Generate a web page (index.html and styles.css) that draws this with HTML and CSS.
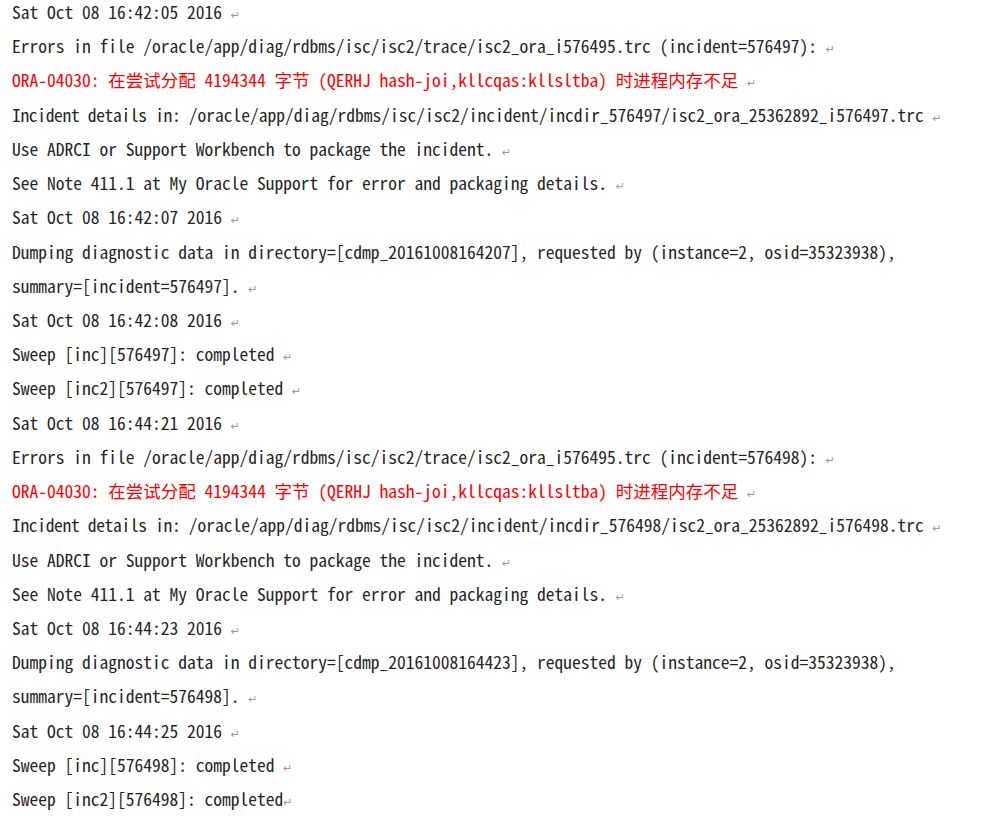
FILE: index.html
```html
<!DOCTYPE html>
<html lang="zh-CN">
<head>
<meta charset="utf-8">
<title>alert log</title>
<link rel="stylesheet" href="styles.css">
</head>
<body>
<div class="doc">
  <p class="ln">Sat Oct 08 16:42:05 2016 <span class="pm">↵</span></p>
  <p class="ln">Errors in file /oracle/app/diag/rdbms/isc/isc2/trace/isc2_ora_i576495.trc (incident=576497): <span class="pm">↵</span></p>
  <p class="ln err">ORA-04030: 在尝试分配 4194344 字节 (QERHJ hash-joi,kllcqas:kllsltba) 时进程内存不足 <span class="pm">↵</span></p>
  <p class="ln"><span class="tight">Incident details in: </span>/oracle/app/diag/rdbms/isc/isc2/incident/incdir_576497/isc2_ora_25362892_i576497.trc <span class="pm">↵</span></p>
  <p class="ln">Use ADRCI or Support Workbench to package the incident. <span class="pm">↵</span></p>
  <p class="ln">See Note 411.1 at My Oracle Support for error and packaging details. <span class="pm">↵</span></p>
  <p class="ln">Sat Oct 08 16:42:07 2016 <span class="pm">↵</span></p>
  <p class="ln">Dumping diagnostic data in directory=[cdmp_20161008164207], requested by (instance=2, osid=35323938),</p>
  <p class="ln">summary=[incident=576497]. <span class="pm">↵</span></p>
  <p class="ln">Sat Oct 08 16:42:08 2016 <span class="pm">↵</span></p>
  <p class="ln">Sweep [inc][576497]: completed <span class="pm">↵</span></p>
  <p class="ln">Sweep [inc2][576497]: completed <span class="pm">↵</span></p>
  <p class="ln">Sat Oct 08 16:44:21 2016 <span class="pm">↵</span></p>
  <p class="ln">Errors in file /oracle/app/diag/rdbms/isc/isc2/trace/isc2_ora_i576495.trc (incident=576498): <span class="pm">↵</span></p>
  <p class="ln err">ORA-04030: 在尝试分配 4194344 字节 (QERHJ hash-joi,kllcqas:kllsltba) 时进程内存不足 <span class="pm">↵</span></p>
  <p class="ln"><span class="tight">Incident details in: </span>/oracle/app/diag/rdbms/isc/isc2/incident/incdir_576498/isc2_ora_25362892_i576498.trc <span class="pm">↵</span></p>
  <p class="ln">Use ADRCI or Support Workbench to package the incident. <span class="pm">↵</span></p>
  <p class="ln">See Note 411.1 at My Oracle Support for error and packaging details. <span class="pm">↵</span></p>
  <p class="ln">Sat Oct 08 16:44:23 2016 <span class="pm">↵</span></p>
  <p class="ln">Dumping diagnostic data in directory=[cdmp_20161008164423], requested by (instance=2, osid=35323938),</p>
  <p class="ln">summary=[incident=576498]. <span class="pm">↵</span></p>
  <p class="ln">Sat Oct 08 16:44:25 2016 <span class="pm">↵</span></p>
  <p class="ln">Sweep [inc][576498]: completed <span class="pm">↵</span></p>
  <p class="ln">Sweep [inc2][576498]: completed<span class="pm">↵</span></p>
</div>
</body>
</html>
```

FILE: styles.css
```css
html, body {
  margin: 0;
  padding: 0;
  background: #ffffff;
}

.doc {
  margin-top: -5px;
  padding-left: 12px;
  font-family: "Noto Sans Mono CJK SC", "Liberation Mono", "Noto Sans CJK SC", monospace;
  font-size: 17.5px;
  color: #262626;
}

.ln {
  margin: 0;
  height: 34.22px;
  line-height: 34.22px;
  white-space: pre;
}

.tight {
  letter-spacing: -0.33px;
}

.err {
  color: #ff0000;
}

.pm {
  color: #9a9a9a;
  font-size: 11px;
  font-family: "DejaVu Sans", sans-serif;
}
```
